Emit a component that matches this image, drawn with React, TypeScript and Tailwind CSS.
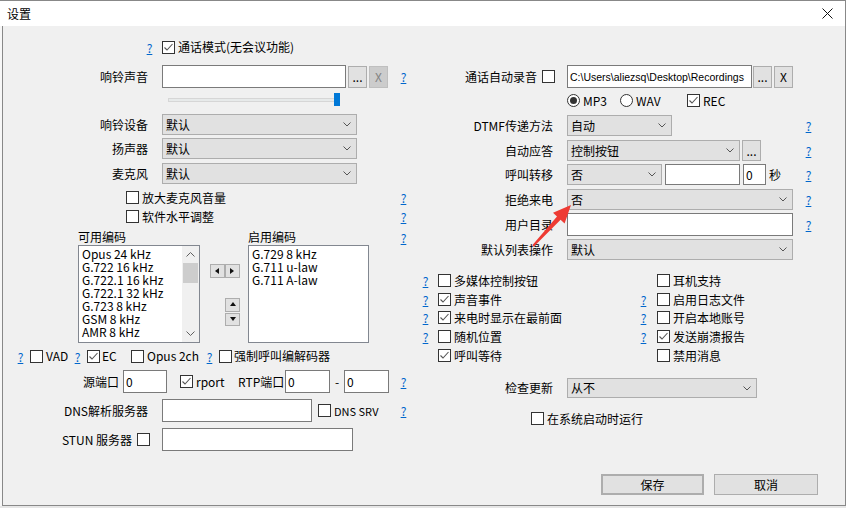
import React from "react";

const avail = [
  "Opus 24 kHz",
  "G.722 16 kHz",
  "G.722.1 16 kHz",
  "G.722.1 32 kHz",
  "G.723 8 kHz",
  "GSM 8 kHz",
  "AMR 8 kHz",
];
const enabled = ["G.729 8 kHz", "G.711 u-law", "G.711 A-law"];

function Help() {
  return <span className="w-[9px] shrink-0 text-center text-[#0066cc] underline leading-[13px]">?</span>;
}

function Check({ on, className = "" }: { on?: boolean; className?: string }) {
  return (
    <span className={`w-[13px] h-[13px] shrink-0 border border-[#333] bg-white flex items-center justify-center ${className}`}>
      {on && (
        <svg width="11" height="11" viewBox="0 0 11 11">
          <path d="M1.5 5.5 L4 8 L9.5 2" fill="none" stroke="#555" strokeWidth="1.1" />
        </svg>
      )}
    </span>
  );
}

function Radio({ on, className = "" }: { on?: boolean; className?: string }) {
  return (
    <span className={`w-[13px] h-[13px] shrink-0 rounded-full border border-[#333] bg-white flex items-center justify-center ${className}`}>
      {on && <span className="w-[7px] h-[7px] rounded-full bg-[#333]" />}
    </span>
  );
}

function Select({ value, className = "" }: { value: string; className?: string }) {
  return (
    <div className={`shrink-0 flex items-center justify-between border border-[#adadad] bg-[#e1e1e1] pl-[3px] pr-[5px] ${className}`}>
      <span className="leading-[14px]">{value}</span>
      <svg width="8" height="5" viewBox="0 0 8 5">
        <path d="M0.5 0.5 L4 4 L7.5 0.5" fill="none" stroke="#555" />
      </svg>
    </div>
  );
}

function Input({ value = "", className = "", textClass = "" }: { value?: string; className?: string; textClass?: string }) {
  return (
    <div className={`shrink-0 flex items-center border border-[#7a7a7a] bg-white pl-[2px] overflow-hidden whitespace-nowrap ${className}`}>
      <span className={`leading-[14px] ${textClass}`}>{value}</span>
    </div>
  );
}

function Btn({ children, className = "", disabled }: { children: React.ReactNode; className?: string; disabled?: boolean }) {
  return (
    <div
      className={`shrink-0 flex items-center justify-center border ${
        disabled ? "bg-[#cccccc] border-[#bfbfbf] text-[#838383]" : "bg-[#e1e1e1] border-[#adadad]"
      } ${className}`}
    >
      <span className="leading-[14px]">{children}</span>
    </div>
  );
}

function Label({ children, className = "w-[145px]" }: { children: React.ReactNode; className?: string }) {
  return <span className={`shrink-0 text-right leading-[14px] ${className}`}>{children}</span>;
}

function Tri({ dir }: { dir: "l" | "r" | "u" | "d" }) {
  const pts = { l: "5,1 1,4 5,7", r: "1,1 5,4 1,7", u: "1,5 4,1 7,5", d: "1,1 4,5 7,1" }[dir];
  return (
    <svg width="8" height="8" viewBox="0 0 8 8">
      <polygon points={pts} fill="#111" />
    </svg>
  );
}

export default function App() {
  return (
    <div className="relative w-[846px] h-[508px] overflow-hidden bg-[#f0f0f0] text-[12px] text-black font-['Noto_Sans_CJK_SC',sans-serif] flex flex-col">
      {/* title bar */}
      <div className="h-[26px] shrink-0 bg-white border-t border-r border-[#888] flex items-center justify-between">
        <span className="pl-[7px] leading-[14px]">设置</span>
        <svg className="mr-[12px]" width="11" height="11" viewBox="0 0 11 11">
          <path d="M0.5 0.5 L10.5 10.5 M10.5 0.5 L0.5 10.5" stroke="#111" strokeWidth="1" />
        </svg>
      </div>

      <div className="h-[480px] shrink-0 flex">
        <div className="w-[2px] shrink-0 bg-[#f7f7f7]" />
        <div className="w-[844px] shrink-0 border-l border-r border-b border-[#888] flex">
          {/* left column */}
          <div className="w-[412px] shrink-0 flex flex-col">
            <div className="mt-[14px] h-[14px] flex items-center">
              <div className="w-[142px] shrink-0" />
              <Help />
              <Check on className="ml-[8px]" />
              <span className="ml-[3px] leading-[14px]">通话模式(无会议功能)</span>
            </div>

            <div className="mt-[11px] h-[23px] w-[405px] flex items-center">
              <Label>响铃声音</Label>
              <Input className="ml-[14px] w-[184px] h-[23px]" />
              <Btn className="ml-[2px] w-[19px] h-[22px]">...</Btn>
              <Btn disabled className="ml-[2px] w-[19px] h-[22px]">X</Btn>
              <div className="flex-1" />
              <Help />
            </div>

            <div className="mt-[5px] h-[13px] flex items-center">
              <div className="ml-[165px] w-[172px] h-[13px] relative flex items-center">
                <div className="w-full h-[4px] bg-[#e7eaea] border border-[#d6d6d6]" />
                <div className="absolute right-0 top-0 w-[6px] h-[13px] bg-[#0078d7]" />
              </div>
            </div>

            <div className="mt-[8px] h-[21px] flex items-center">
              <Label>响铃设备</Label>
              <Select value="默认" className="ml-[14px] w-[195px] h-[21px]" />
            </div>
            <div className="mt-[3px] h-[21px] flex items-center">
              <Label>扬声器</Label>
              <Select value="默认" className="ml-[14px] w-[195px] h-[21px]" />
            </div>
            <div className="mt-[4px] h-[21px] flex items-center">
              <Label>麦克风</Label>
              <Select value="默认" className="ml-[14px] w-[195px] h-[21px]" />
            </div>

            <div className="mt-[7px] h-[13px] w-[405px] flex items-center">
              <Check className="ml-[123px]" />
              <span className="ml-[3px] leading-[14px]">放大麦克风音量</span>
              <div className="flex-1" />
              <Help />
            </div>
            <div className="mt-[6px] h-[13px] w-[405px] flex items-center">
              <Check className="ml-[123px]" />
              <span className="ml-[3px] leading-[14px]">软件水平调整</span>
              <div className="flex-1" />
              <Help />
            </div>

            <div className="mt-[7px] h-[14px] w-[405px] flex items-center">
              <span className="ml-[75px] w-[170px] shrink-0 leading-[14px]">可用编码</span>
              <span className="leading-[14px]">启用编码</span>
              <div className="flex-1" />
              <Help />
            </div>

            <div className="mt-[1px] h-[98px] flex">
              <div className="ml-[75px] w-[122px] h-[98px] shrink-0 border border-[#828790] bg-white flex">
                <div className="flex-1 pl-[3px] pt-[1px] overflow-hidden">
                  {avail.map((c) => (
                    <div key={c} className="h-[13px] leading-[13px] whitespace-nowrap">
                      {c}
                    </div>
                  ))}
                </div>
                <div className="w-[17px] shrink-0 bg-[#f0f0f0] flex flex-col items-center">
                  <div className="h-[17px] flex items-center">
                    <svg width="9" height="5" viewBox="0 0 9 5">
                      <path d="M0.5 4.5 L4.5 0.5 L8.5 4.5" fill="none" stroke="#606060" />
                    </svg>
                  </div>
                  <div className="w-[15px] h-[20px] bg-[#cdcdcd]" />
                  <div className="flex-1" />
                  <div className="h-[17px] flex items-center">
                    <svg width="9" height="5" viewBox="0 0 9 5">
                      <path d="M0.5 0.5 L4.5 4.5 L8.5 0.5" fill="none" stroke="#606060" />
                    </svg>
                  </div>
                </div>
              </div>

              <div className="w-[48px] shrink-0 flex flex-col pl-[10px]">
                <div className="mt-[19px] flex">
                  <div className="w-[15px] h-[14px] border border-[#adadad] bg-[#e1e1e1] flex items-center justify-center">
                    <Tri dir="l" />
                  </div>
                  <div className="w-[15px] h-[14px] border border-[#adadad] bg-[#e1e1e1] flex items-center justify-center">
                    <Tri dir="r" />
                  </div>
                </div>
                <div className="ml-[15px] mt-[20px] w-[15px] h-[14px] border border-[#adadad] bg-[#e1e1e1] flex items-center justify-center">
                  <Tri dir="u" />
                </div>
                <div className="ml-[15px] mt-[1px] w-[15px] h-[13px] border border-[#adadad] bg-[#e1e1e1] flex items-center justify-center">
                  <Tri dir="d" />
                </div>
              </div>

              <div className="w-[121px] h-[98px] shrink-0 border border-[#828790] bg-white pl-[3px] pt-[1px]">
                {enabled.map((c) => (
                  <div key={c} className="h-[13px] leading-[13px] whitespace-nowrap">
                    {c}
                  </div>
                ))}
              </div>
            </div>

            <div className="mt-[6px] h-[14px] flex items-center">
              <div className="ml-[13px] flex">
                <Help />
              </div>
              <Check className="ml-[5px]" />
              <span className="ml-[3px] w-[27px] shrink-0 leading-[14px]">VAD</span>
              <Help />
              <Check on className="ml-[5px]" />
              <span className="ml-[2px] w-[29px] shrink-0 leading-[14px]">EC</span>
              <Check />
              <span className="ml-[3px] w-[58px] shrink-0 leading-[14px]">Opus 2ch</span>
              <Help />
              <Check className="ml-[5px]" />
              <span className="ml-[2px] leading-[14px]">强制呼叫编解码器</span>
            </div>

            <div className="mt-[7px] h-[23px] w-[405px] flex items-center">
              <span className="ml-[80px] w-[40px] shrink-0 leading-[14px]">源端口</span>
              <Input value="0" className="w-[44px] h-[23px]" />
              <Check on className="ml-[13px]" />
              <span className="ml-[3px] w-[42px] shrink-0 leading-[14px]">rport</span>
              <span className="w-[47px] shrink-0 leading-[14px]">RTP端口</span>
              <Input value="0" className="w-[45px] h-[23px]" />
              <span className="w-[14px] shrink-0 text-center leading-[14px]">-</span>
              <Input value="0" className="w-[45px] h-[23px]" />
              <div className="flex-1" />
              <Help />
            </div>

            <div className="mt-[6px] h-[23px] w-[405px] flex items-center">
              <Label>DNS解析服务器</Label>
              <Input className="ml-[14px] w-[150px] h-[23px]" />
              <Check className="ml-[6px]" />
              <span className="ml-[3px] text-[11px] leading-[14px]">DNS SRV</span>
              <div className="flex-1" />
              <Help />
            </div>

            <div className="mt-[6px] h-[23px] flex items-center">
              <div className="w-[147px] shrink-0 flex items-center justify-end">
                <span className="leading-[14px]">STUN 服务器</span>
                <Check className="ml-[5px]" />
              </div>
              <Input className="ml-[12px] w-[191px] h-[23px]" />
            </div>
          </div>

          {/* right column */}
          <div className="flex-1 flex flex-col">
            <div className="mt-[39px] h-[23px] flex items-center">
              <div className="w-[140px] shrink-0 flex items-center justify-end">
                <span className="leading-[14px]">通话自动录音</span>
                <Check className="ml-[5px]" />
              </div>
              <Input
                value="C:\Users\aliezsq\Desktop\Recordings"
                textClass="font-['Liberation_Sans',sans-serif] text-[10.5px]"
                className="ml-[12px] w-[185px] h-[23px]"
              />
              <Btn className="ml-[1px] w-[19px] h-[22px]">...</Btn>
              <Btn className="ml-[2px] w-[19px] h-[22px]">X</Btn>
            </div>

            <div className="mt-[6px] h-[13px] flex items-center">
              <Radio on className="ml-[152px]" />
              <span className="ml-[3px] w-[37px] shrink-0 leading-[14px]">MP3</span>
              <Radio />
              <span className="ml-[3px] w-[51px] shrink-0 leading-[14px]">WAV</span>
              <Check on />
              <span className="ml-[3px] leading-[14px]">REC</span>
            </div>

            <div className="mt-[8px] h-[21px] w-[398px] flex items-center">
              <Label className="w-[138px]">DTMF传递方法</Label>
              <Select value="自动" className="ml-[14px] w-[105px] h-[21px]" />
              <div className="flex-1" />
              <Help />
            </div>
            <div className="mt-[4px] h-[21px] w-[398px] flex items-center">
              <Label className="w-[138px]">自动应答</Label>
              <Select value="控制按钮" className="ml-[14px] w-[173px] h-[21px]" />
              <Btn className="ml-[2px] w-[19px] h-[21px]">...</Btn>
              <div className="flex-1" />
              <Help />
            </div>
            <div className="mt-[3px] h-[21px] w-[398px] flex items-center">
              <Label className="w-[138px]">呼叫转移</Label>
              <Select value="否" className="ml-[14px] w-[95px] h-[21px]" />
              <Input className="ml-[3px] w-[75px] h-[21px]" />
              <Input value="0" className="ml-[3px] w-[23px] h-[21px]" />
              <span className="ml-[3px] leading-[14px]">秒</span>
              <div className="flex-1" />
              <Help />
            </div>
            <div className="mt-[4px] h-[21px] w-[398px] flex items-center">
              <Label className="w-[138px]">拒绝来电</Label>
              <Select value="否" className="ml-[14px] w-[226px] h-[21px]" />
              <div className="flex-1" />
              <Help />
            </div>
            <div className="mt-[3px] h-[23px] w-[398px] flex items-center">
              <Label className="w-[138px]">用户目录</Label>
              <Input className="ml-[14px] w-[226px] h-[23px]" />
              <div className="flex-1" />
              <Help />
            </div>
            <div className="mt-[3px] h-[21px] w-[398px] flex items-center">
              <Label className="w-[138px]">默认列表操作</Label>
              <Select value="默认" className="ml-[14px] w-[226px] h-[21px]" />
            </div>

            {[
              { mt: "mt-[14px]", a: { help: true, on: false, t: "多媒体控制按钮" }, b: { help: false, on: false, t: "耳机支持" } },
              { mt: "mt-[6px]", a: { help: true, on: true, t: "声音事件" }, b: { help: true, on: false, t: "启用日志文件" } },
              { mt: "mt-[5px]", a: { help: true, on: true, t: "来电时显示在最前面" }, b: { help: true, on: false, t: "开启本地账号" } },
              { mt: "mt-[6px]", a: { help: true, on: false, t: "随机位置" }, b: { help: true, on: true, t: "发送崩溃报告" } },
              { mt: "mt-[6px]", a: { help: false, on: true, t: "呼叫等待" }, b: { help: false, on: false, t: "禁用消息" } },
            ].map((r) => (
              <div key={r.a.t} className={`${r.mt} h-[13px] flex items-center`}>
                <div className="ml-[6px] w-[9px] shrink-0 flex">{r.a.help && <Help />}</div>
                <Check on={r.a.on} className="ml-[8px]" />
                <span className="ml-[3px] w-[185px] shrink-0 leading-[14px]">{r.a.t}</span>
                <div className="w-[9px] shrink-0 flex">{r.b.help && <Help />}</div>
                <Check on={r.b.on} className="ml-[9px]" />
                <span className="ml-[3px] leading-[14px]">{r.b.t}</span>
              </div>
            ))}

            <div className="mt-[16px] h-[20px] flex items-center">
              <Label className="w-[138px]">检查更新</Label>
              <Select value="从不" className="ml-[14px] w-[190px] h-[20px]" />
            </div>

            <div className="mt-[14px] h-[13px] flex items-center">
              <Check className="ml-[116px]" />
              <span className="ml-[3px] leading-[14px]">在系统启动时运行</span>
            </div>

            <div className="mt-[49px] h-[21px] flex items-center">
              <Btn className="ml-[186px] w-[103px] h-[21px] border-2 border-[#0078d7]">保存</Btn>
              <Btn className="ml-[10px] w-[104px] h-[21px]">取消</Btn>
            </div>
          </div>
        </div>
      </div>

      <div className="h-[2px] shrink-0 bg-[#e6e6e6]" />

      {/* red annotation arrow */}
      <svg className="absolute left-0 top-0 pointer-events-none" width="846" height="508" viewBox="0 0 846 508">
        <polygon
          points="532.3,245.3 557,216.4 553,212.7 571,205 564.6,223.5 560.6,219.8 533.7,246.7"
          fill="#ee3b33"
        />
      </svg>
    </div>
  );
}
